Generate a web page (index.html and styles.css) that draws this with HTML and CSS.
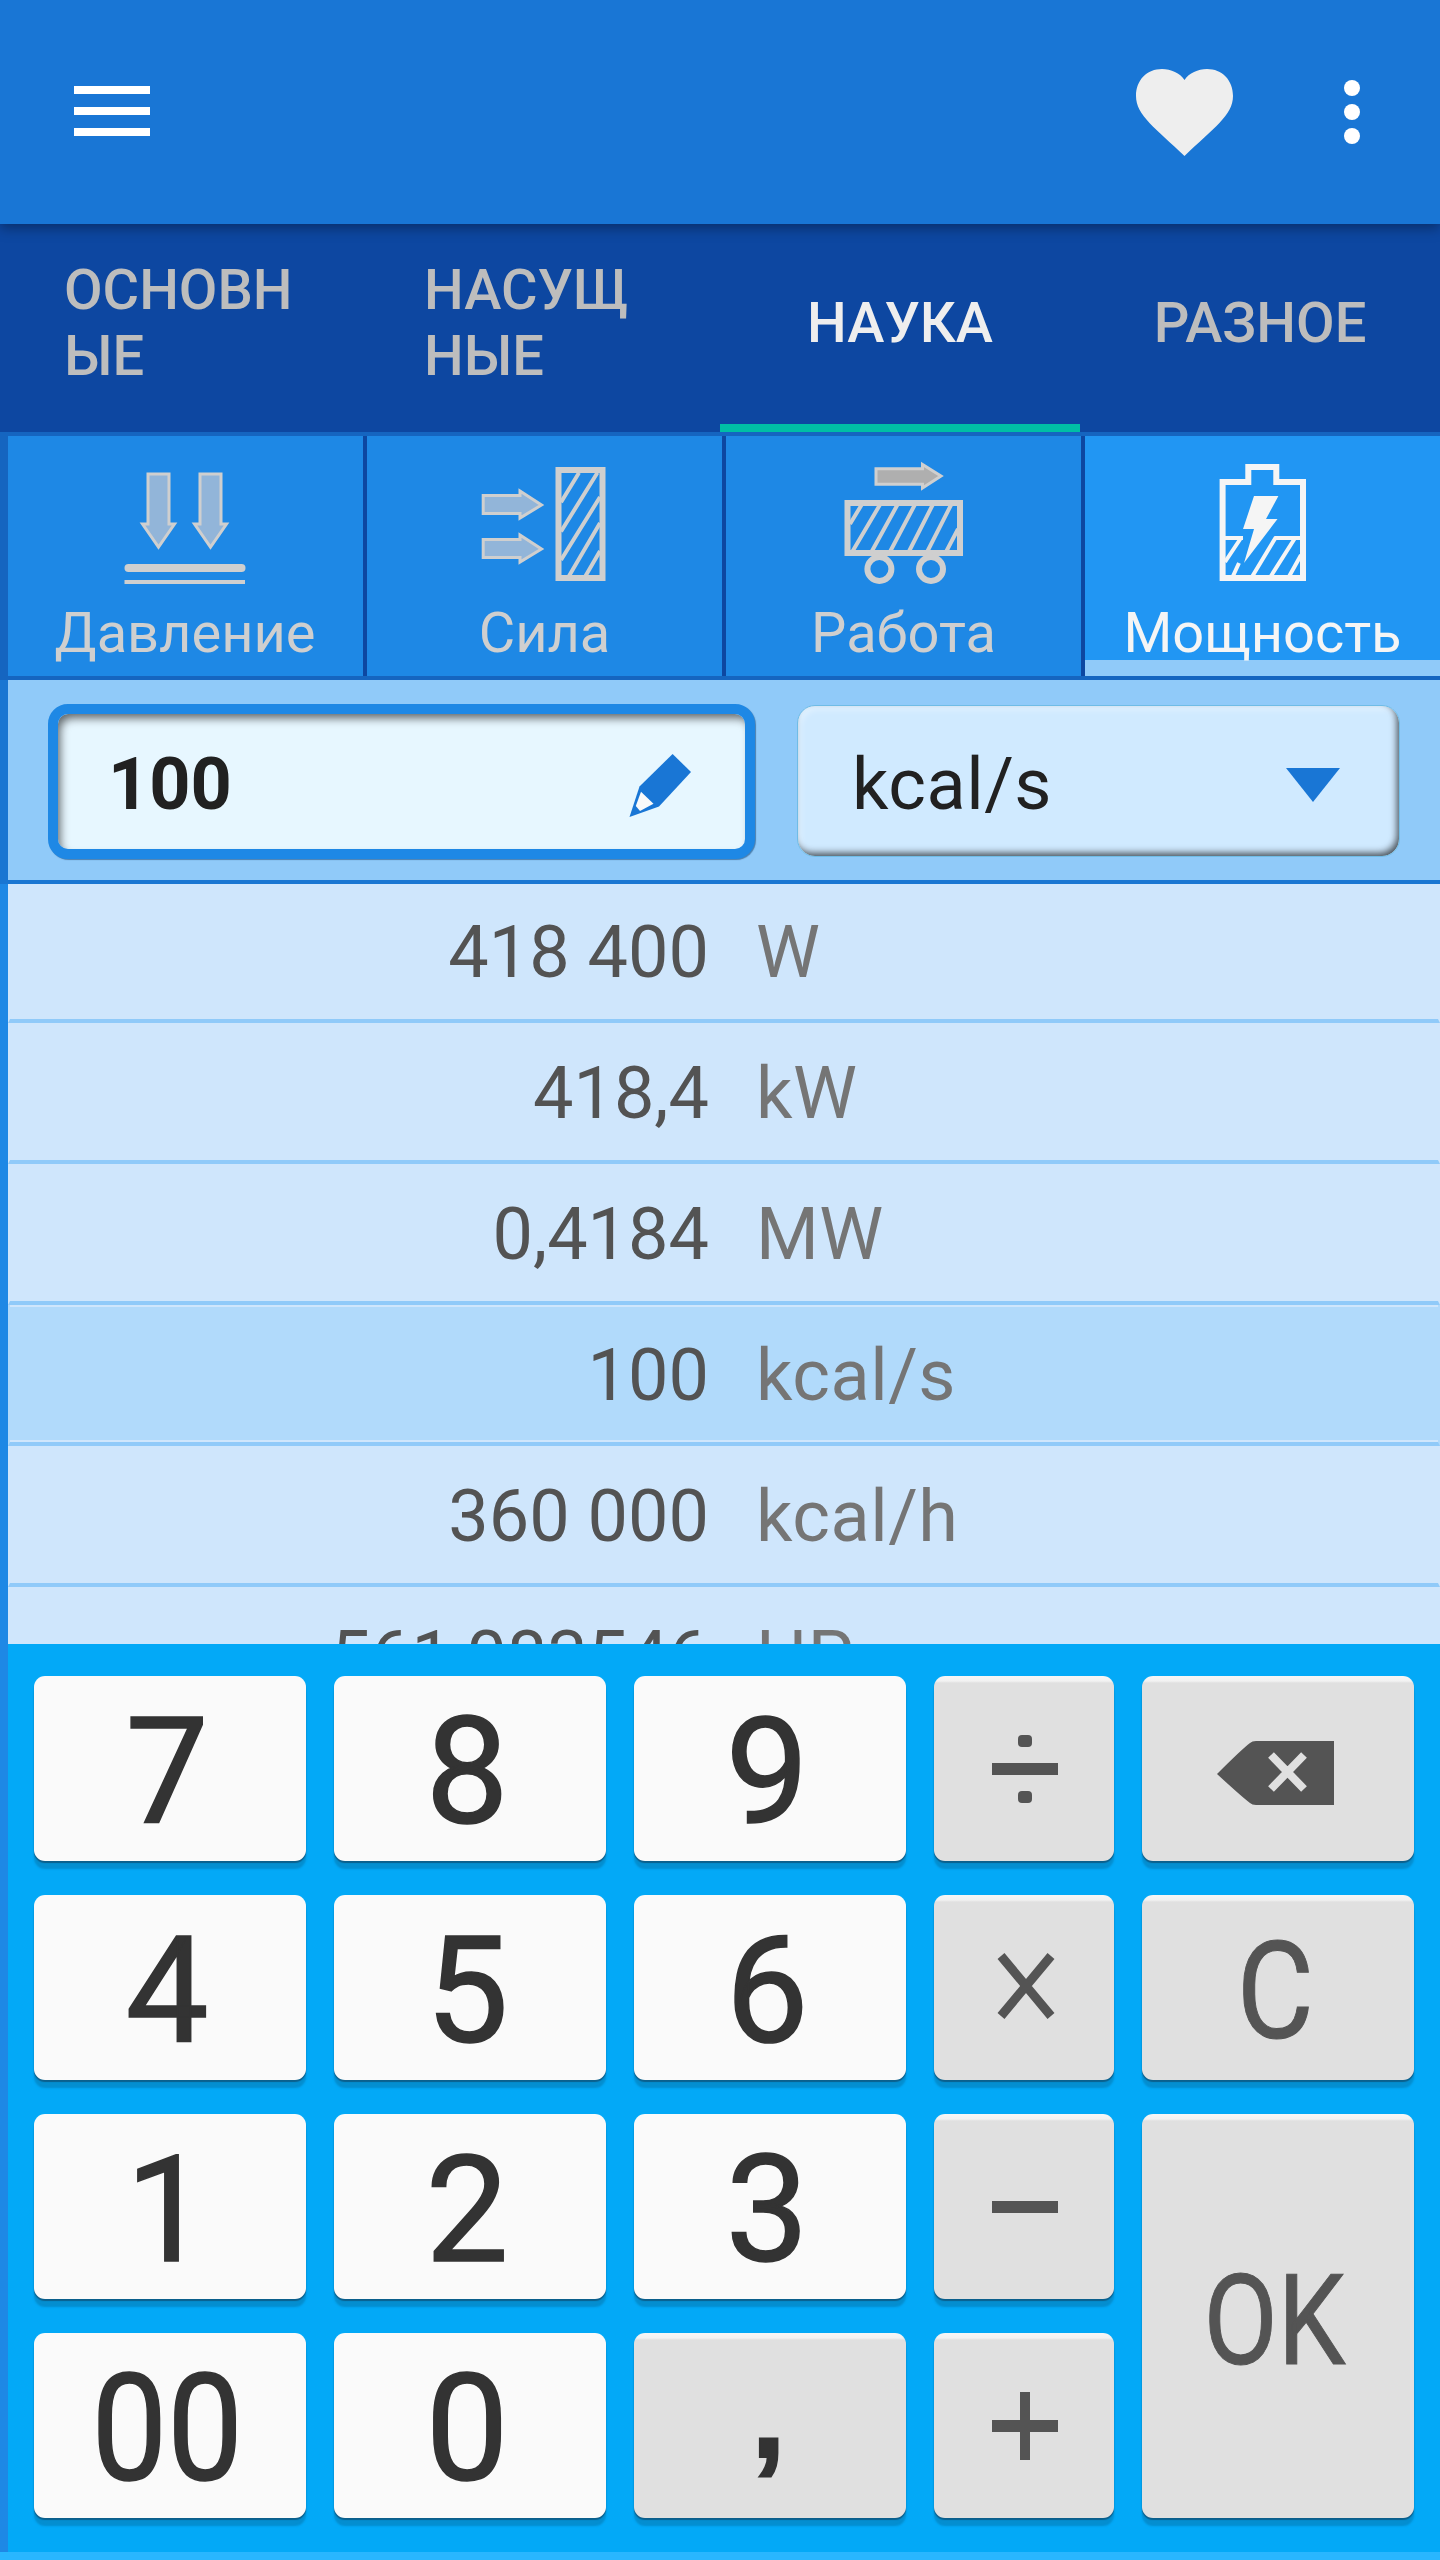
FILE: index.html
```
<!DOCTYPE html>
<html lang="ru">
<head>
    <meta charset="UTF-8">
    <meta name="viewport" content="width=device-width, initial-scale=1.0">
    <title>Конвертер</title>
    <link rel="stylesheet" href="styles.css">
</head>
<body>
    <div class="app">
        <header class="toolbar">
            <svg class="menu-icon" viewBox="0 0 76 50">
                <path d="M0 0H76V8H0ZM0 21H76V29H0ZM0 42H76V50H0Z"/>
            </svg>
            <svg class="heart-icon" viewBox="0 0 97 87">
                <path d="M48.5 87C20 59.500 0 46.500 0 27C0 11 11 0 26 0C35 0 44 4 48.500 11C53 4 62 0 71 0C86 0 97 11 97 27C97 46.500 77 59.500 48.500 87Z"/>
            </svg>
            <svg class="more-icon" viewBox="0 0 16 64">
                <circle cx="8" cy="8" r="8"/>
                <circle cx="8" cy="32" r="8"/>
                <circle cx="8" cy="56" r="8"/>
            </svg>
        </header>

        <nav class="tabs">
            <div class="tab tab-long">ОСНОВН<br>ЫЕ</div>
            <div class="tab tab-long">НАСУЩ<br>НЫЕ</div>
            <div class="tab active">НАУКА</div>
            <div class="tab">РАЗНОЕ</div>
        </nav>

        <div class="categories">
            <div class="category">
                <svg viewBox="0 0 144 128">
                    <g class="arrow">
                        <path d="M35 14H56V64H61.500L45.500 87L29.500 64H35Z"/>
                        <path d="M87 14H108V64H113.500L97.500 87L81.500 64H87Z"/>
                    </g>
                    <rect class="solid" x="11.500" y="104" width="121" height="8" rx="4"/>
                    <rect class="solid" x="11.500" y="120" width="120.500" height="4"/>
                </svg>
                <span>Давление</span>
            </div>
            <div class="category">
                <svg viewBox="0 0 144 128">
                    <g class="arrow">
                        <path d="M10.200 35.500H47V31L68.500 45L47 58V53.500H10.200Z"/>
                        <path d="M10.200 79.500H47V75L68.500 89L47 102V97.500H10.200Z"/>
                    </g>
                    <rect class="outline" x="85.500" y="10" width="44" height="108"/>
                    <path class="hatch" d="M88 42.300L106 12.700M88 71.500L124.400 12.700M88 100L127 37M96 116L127 63M112.500 116L127 91"/>
                </svg>
                <span>Сила</span>
            </div>
            <div class="category">
                <svg viewBox="0 0 144 128">
                    <path class="arrow arrow-gray" d="M44 8.700H90.500V4.500L109 16L90.500 28V24.300H44Z"/>
                    <rect class="outline" x="15.500" y="43" width="112.500" height="50"/>
                    <path class="hatch" d="M18 64L29.500 45M20.700 91L47.800 45M40 91L65.300 45M58.400 91L82.700 45M77.200 91L100.600 45M95.600 91L119 45M114.500 91L126 69"/>
                    <circle class="outline" cx="47.400" cy="109" r="12"/>
                    <circle class="outline" cx="99" cy="109" r="12"/>
                </svg>
                <span>Работа</span>
            </div>
            <div class="category selected">
                <svg viewBox="0 0 144 128">
                    <path class="outline" d="M31.600 22H57.300V7H85.300V22H112V118H31.600Z"/>
                    <path class="solid" d="M63 36H87.400L75 59H86.500L53 103L63 69H52Z"/>
                    <path class="hatch" d="M34 78H52M84 78H110M34 102L50.600 77M42 116L48 103M61.500 116L85 77M80 116L103.400 79M98.300 116L110 95"/>
                </svg>
                <span>Мощность</span>
            </div>
        </div>

        <div class="entry">
            <div class="value-field">
                <span>100</span>
                <svg class="pencil-icon" viewBox="0 0 72 72">
                    <path d="M49.600 5L68 23L36 57.500L6.500 68L16.500 37.500Z"/>
                    <path class="wood" d="M18 42.700L30.500 54.700L17 62L12.800 57Z"/>
                </svg>
            </div>
            <div class="unit-select">
                <span>kcal/s</span>
                <svg class="drop-icon" viewBox="0 0 54 34">
                    <path d="M0 0H54L27 34Z"/>
                </svg>
            </div>
        </div>

        <div class="results">
            <div class="row"><span class="number">418 400</span><span class="unit">W</span></div>
            <div class="row"><span class="number">418,4</span><span class="unit">kW</span></div>
            <div class="row"><span class="number">0,4184</span><span class="unit">MW</span></div>
            <div class="row current"><span class="number">100</span><span class="unit">kcal/s</span></div>
            <div class="row"><span class="number">360 000</span><span class="unit">kcal/h</span></div>
            <div class="row"><span class="number">561,083546</span><span class="unit">HP</span></div>
        </div>

        <div class="keypad">
            <button class="key">7</button>
            <button class="key">8</button>
            <button class="key">9</button>
            <button class="key gray">
                <svg class="op-icon" viewBox="0 0 68 70">
                    <rect x="1" y="29" width="66" height="12"/>
                    <rect x="27" y="1" width="14" height="12" rx="4"/>
                    <rect x="27" y="57" width="14" height="12" rx="4"/>
                </svg>
            </button>
            <button class="key gray">
                <svg class="erase-icon" viewBox="0 0 118 66">
                    <path d="M1 34Q26 9 34 3Q36 1 40 1H118V65H40Q36 65 34 63Q26 57 1 34Z"/>
                    <path class="cross" d="M55 15L88 49M88 15L55 49"/>
                </svg>
            </button>

            <button class="key">4</button>
            <button class="key">5</button>
            <button class="key">6</button>
            <button class="key gray">
                <svg class="op-icon" viewBox="0 0 68 70">
                    <path class="times" d="M10 3L60 63M60 3L10 63"/>
                </svg>
            </button>
            <button class="key gray key-clear"><span>C</span></button>

            <button class="key">1</button>
            <button class="key">2</button>
            <button class="key">3</button>
            <button class="key gray">
                <svg class="op-icon" viewBox="0 0 68 70">
                    <rect x="1" y="29" width="66" height="12"/>
                </svg>
            </button>
            <button class="key gray key-ok"><span>OK</span></button>

            <button class="key key-zeros"><span>00</span></button>
            <button class="key">0</button>
            <button class="key gray key-comma">,</button>
            <button class="key gray">
                <svg class="op-icon" viewBox="0 0 68 70">
                    <rect x="1" y="29" width="66" height="12"/>
                    <rect x="29" y="1" width="10" height="68"/>
                </svg>
            </button>
        </div>
    </div>
</body>
</html>
```
FILE: styles.css
```
* {
    margin: 0;
    padding: 0;
    box-sizing: border-box;
}

body {
    font-family: Roboto, "Noto Sans", sans-serif;
    background-color: #29b6ff;
}

.app {
    display: flex;
    flex-direction: column;
    width: 1440px;
    height: 2560px;
    overflow: hidden;
}

svg {
    display: block;
    flex: none;
}

/* toolbar */
.toolbar {
    display: flex;
    align-items: center;
    height: 224px;
    padding: 0 80px 0 74px;
    background-color: #1976d5;
    fill: #fff;
    box-shadow: 0 4px 12px rgba(0, 0, 0, 0.35);
    z-index: 1;
}

.menu-icon {
    width: 76px;
    height: 50px;
    margin-bottom: 2px;
}

.heart-icon {
    width: 97px;
    height: 87px;
    margin: 1px 111px 0 auto;
    fill: #eee;
}

.more-icon {
    width: 16px;
    height: 64px;
}

/* tabs */
.tabs {
    display: flex;
    height: 208px;
    background-color: #0d47a1;
}

.tab {
    display: flex;
    align-items: center;
    justify-content: center;
    width: 360px;
    padding-bottom: 10px;
    color: #bdbdbd;
    font-size: 56px;
    font-weight: 500;
    line-height: 66px;
}

.tab-long {
    justify-content: flex-start;
    padding-left: 64px;
}

.tab.active {
    padding: 8px 0 10px;
    color: #eee;
    border-bottom: 8px solid #00bfa5;
}

/* categories */
.categories {
    display: grid;
    grid-template-columns: repeat(4, 1fr);
    gap: 4px;
    height: 248px;
    border: 4px solid #1565c0;
    border-width: 4px 0 4px 8px;
    background-color: #0d47a1;
}

.category {
    display: flex;
    flex-direction: column;
    align-items: center;
    min-width: 0;
    padding-top: 24px;
    background-color: #1e88e5;
    color: #cfcfcf;
    font-size: 56px;
    line-height: 66px;
}

.category:first-child {
    padding-right: 1px;
}

.category svg {
    width: 144px;
    height: 128px;
    margin-bottom: 12px;
}

.category.selected {
    background: linear-gradient(#2196f3 224px, #90caf9 224px);
    color: #f5f5f5;
}

.solid {
    fill: currentColor;
}

.outline {
    fill: none;
    stroke: currentColor;
    stroke-width: 6;
}

.hatch {
    fill: none;
    stroke: currentColor;
    stroke-width: 4;
}

.arrow {
    fill: #92b5d9;
    stroke: currentColor;
    stroke-width: 3;
}

.arrow-gray {
    fill: #afafaf;
}

/* value and unit */
.entry {
    display: flex;
    align-items: flex-start;
    gap: 42px;
    height: 204px;
    padding: 24px 40px 0;
    border-left: 8px solid #1976d2;
    border-bottom: 4px solid #1976d2;
    background-color: #90caf9;
    color: #212121;
    font-size: 72px;
}

.value-field {
    display: flex;
    align-items: center;
    justify-content: space-between;
    width: 707px;
    height: 155px;
    padding: 6px 50px 0 50px;
    border: 10px solid #1e88e5;
    border-radius: 20px;
    background-color: #e7f7ff;
    box-shadow: inset 4px 6px 10px -2px rgba(0, 0, 0, 0.6), 1px 1px 1px #4b7fae;
    font-weight: 700;
}

.pencil-icon {
    width: 72px;
    height: 72px;
    fill: #1976d5;
}

.wood {
    fill: #fafafa;
}

.unit-select {
    display: flex;
    align-items: center;
    justify-content: space-between;
    width: 603px;
    height: 152px;
    margin-top: 1px;
    padding: 6px 59px 0 54px;
    border: 1px solid #6fbce6;
    border-radius: 18px;
    background-color: #d0eaff;
    box-shadow: inset -3px -4px 7px -1px rgba(0, 0, 0, 0.65), inset 3px 4px 6px rgba(255, 255, 255, 0.35);
    letter-spacing: 0.5px;
}

.drop-icon {
    width: 54px;
    height: 34px;
    margin-top: 2px;
    fill: #1976d5;
}

/* results */
.results {
    height: 760px;
    border-left: 8px solid #1e88e5;
    background-color: #cfe6fc;
    overflow: hidden;
}

.row {
    display: flex;
    align-items: center;
    gap: 47px;
    height: 141px;
    padding-top: 4px;
    border-bottom: 4px solid #90caf9;
    border-left: 2px solid #cfe6fc;
    border-right: 2px solid #cfe6fc;
    font-size: 72px;
}

.row:first-child {
    margin-top: -2px;
}

.row.current {
    box-shadow: inset 0 2px #cfe6fc, inset 0 -2px #cfe6fc;
    border-left-color: #b1dafb;
    border-right-color: #b1dafb;
    background-color: #b1dafb;
}

.number {
    width: 699px;
    color: #535353;
    text-align: right;
}

.unit {
    color: #757575;
    letter-spacing: 0.5px;
}

/* keypad */
.keypad {
    display: grid;
    grid-template-columns: 272px 272px 272px 180px 272px;
    grid-auto-rows: 185px;
    gap: 34px 28px;
    height: 908px;
    padding: 32px 26px;
    border-left: 8px solid #1e88e5;
    background-color: #03a9f7;
    box-shadow: 0 8px #29b6ff;
}

.key {
    display: flex;
    align-items: center;
    justify-content: center;
    padding: 8px 6px 0 0;
    border: none;
    border-radius: 11px;
    background-color: #fafafa;
    box-shadow: 0 2px 1px #0b5f8c, 0 8px 2px #048ed0;
    color: #333;
    font-family: inherit;
    font-size: 148px;
    -webkit-text-stroke: 1.5px #333;
}

.key span {
    display: block;
}

.key.gray {
    padding: 6px 0 0 1px;
    background-color: #e0e0e0;
    background-image: linear-gradient(#f6f6f6, #f2f2f2 5px, #e0e0e0 7px);
    color: #545454;
    fill: #545454;
    -webkit-text-stroke: 0;
}

.key-zeros span {
    transform: scaleX(0.91);
}

.key.key-clear {
    padding: 8px 5px 0 0;
    font-size: 136px;
    -webkit-text-stroke: 1px #545454;
}

.key-clear span {
    transform: scaleX(0.87);
}

.key.key-ok {
    grid-column: 5;
    grid-row: 3 / span 2;
    padding: 8px 7px 0 0;
    font-size: 127px;
    -webkit-text-stroke: 1px #545454;
}

.key-ok span {
    transform: scaleX(0.85);
}

.key.key-comma {
    padding: 0 3px 24px 0;
    color: #333;
    font-family: "Liberation Sans", Arial, sans-serif;
    font-weight: 700;
    font-size: 124px;
    -webkit-text-stroke: 2px #333;
}

.op-icon {
    width: 68px;
    height: 70px;
    margin-bottom: 6px;
}

.times {
    stroke: #545454;
    stroke-width: 9;
}

.erase-icon {
    width: 118px;
    height: 66px;
    margin: 0 8px -3px 0;
}

.cross {
    stroke: #e0e0e0;
    stroke-width: 8;
}
```
